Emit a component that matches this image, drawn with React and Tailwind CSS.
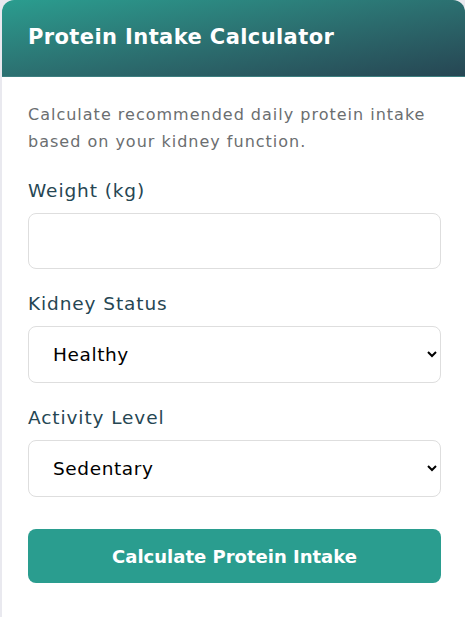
export default function App() {
  const font = { fontFamily: "'DejaVu Sans', 'Noto Sans', sans-serif" };

  return (
    <div className="min-h-screen bg-[#e9e9ef] flex" style={font}>
      <div className="ml-[2px] flex-1 bg-white rounded-t-xl overflow-hidden min-h-[617px]">
        <div className="h-[77px] flex items-center px-[26px] bg-gradient-to-br from-[#2a9d8f] to-[#264653] border-b border-[#3d7f80]">
          <h2 className="text-[21px] font-bold text-white tracking-[0.4px]">Protein Intake Calculator</h2>
        </div>

        <div className="pl-[26px] pr-[24px] pt-[24px]">
          <p className="text-[16px] leading-[27px] text-[#6b6e70] tracking-[1px]">
            Calculate recommended daily protein intake based on your kidney function.
          </p>

          <label className="block mt-[22px] text-[18.5px] leading-[28px] text-[#264653] tracking-[0.9px]">Weight (kg)</label>
          <input
            type="number"
            className="mt-[8px] w-full h-[56px] rounded-lg border border-[#dedede] px-5 text-[18px] outline-none"
          />

          <label className="block mt-[21px] text-[18.5px] leading-[28px] text-[#264653] tracking-[0.9px]">Kidney Status</label>
          <select className="mt-[8px] w-full h-[57px] rounded-lg border border-[#dedede] bg-white pl-5 pr-2 text-[18.5px] tracking-[0.6px] text-black outline-none">
            <option>Healthy</option>
            <option>Mild CKD (Stage 1-2)</option>
            <option>Moderate CKD (Stage 3)</option>
            <option>Severe CKD (Stage 4-5)</option>
            <option>Dialysis</option>
          </select>

          <label className="block mt-[21px] text-[18.5px] leading-[28px] text-[#264653] tracking-[0.9px]">Activity Level</label>
          <select className="mt-[8px] w-full h-[57px] rounded-lg border border-[#dedede] bg-white pl-5 pr-2 text-[18.5px] tracking-[0.6px] text-black outline-none">
            <option>Sedentary</option>
            <option>Lightly Active</option>
            <option>Moderately Active</option>
            <option>Very Active</option>
          </select>

          <button className="mt-[32px] w-full h-[54px] rounded-lg bg-[#2a9d8f] text-white text-[18px] font-bold">
            Calculate Protein Intake
          </button>
        </div>
      </div>
    </div>
  );
}
